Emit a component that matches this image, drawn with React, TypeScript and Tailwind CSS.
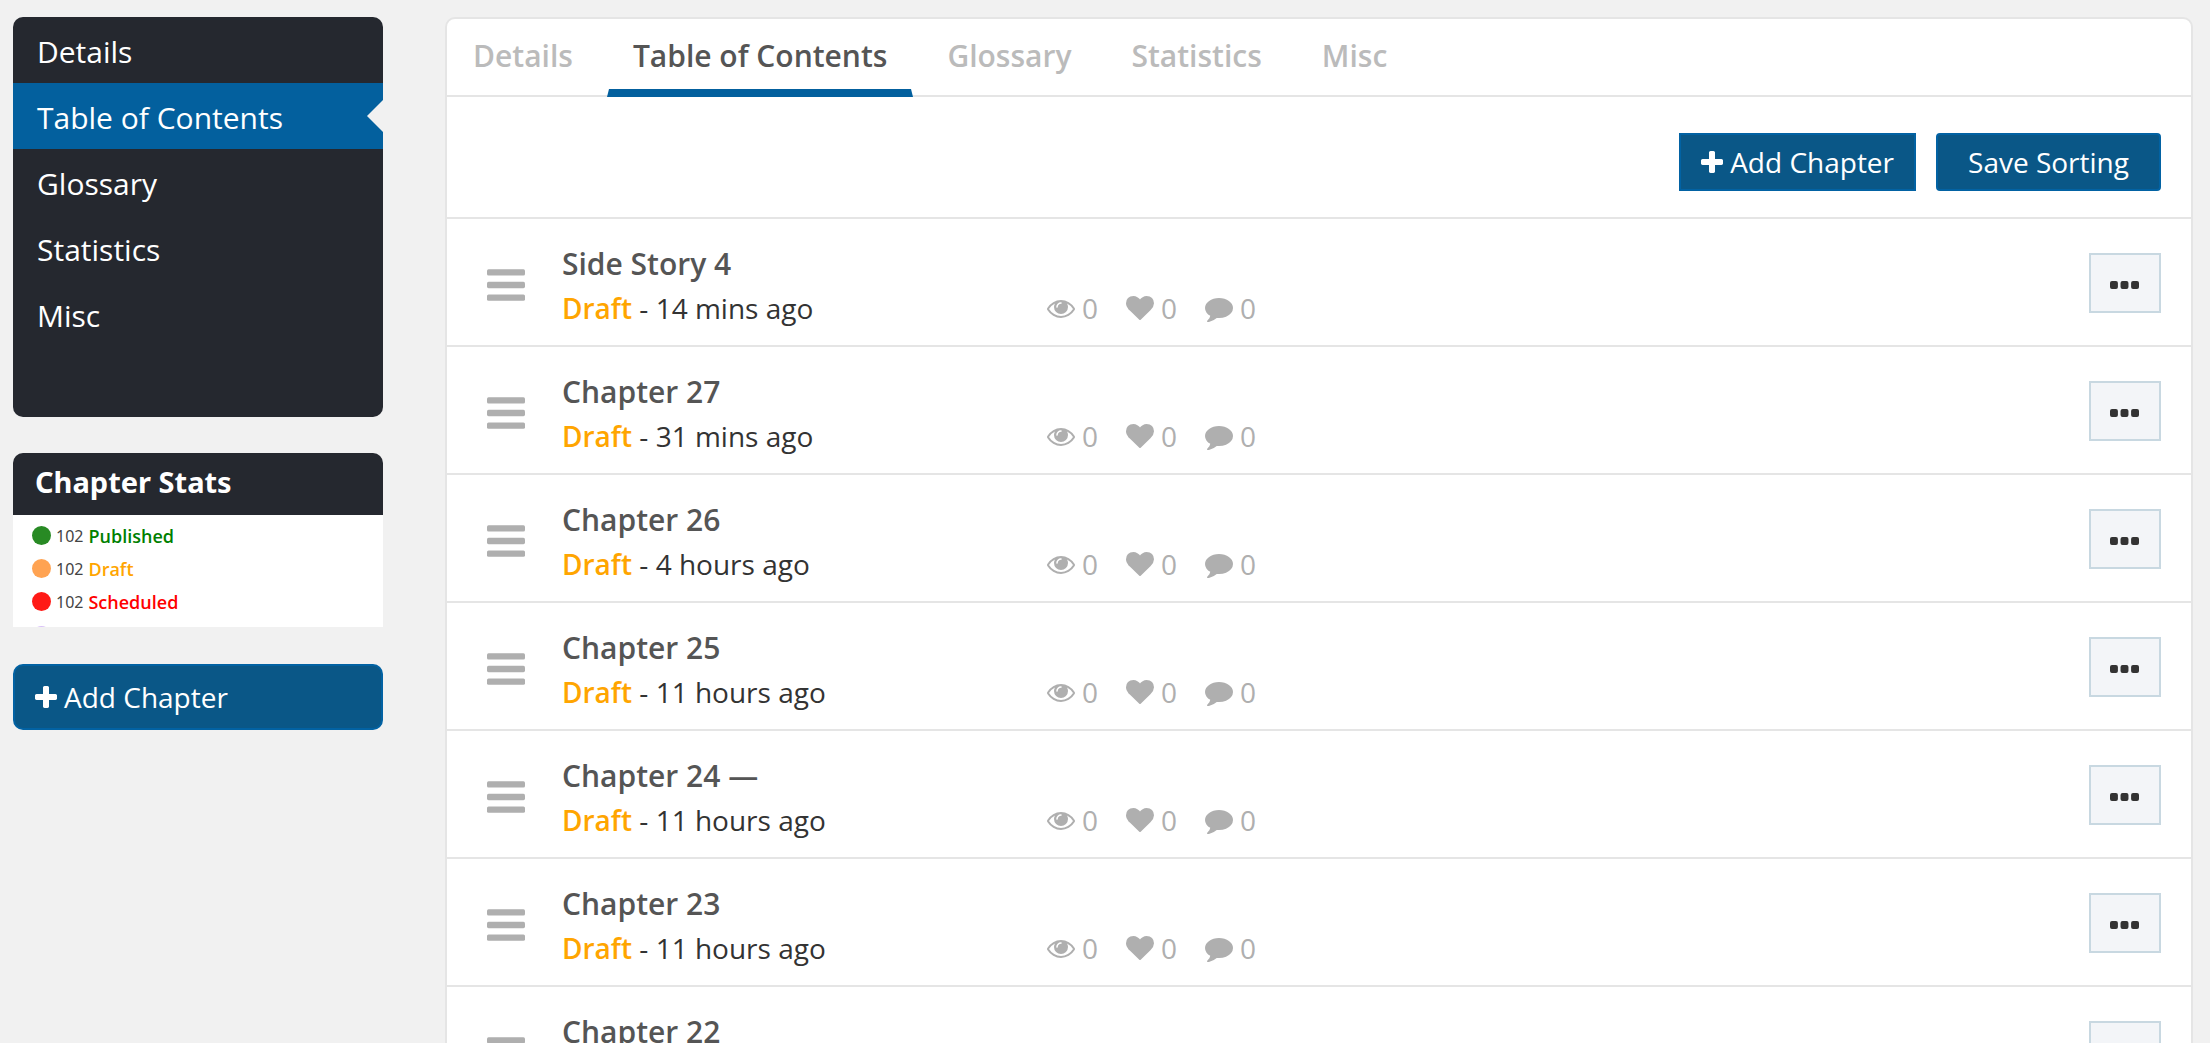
import { useState } from 'react';
import type { ReactNode } from 'react';
import clsx from 'clsx';

const SECTIONS = ['Details', 'Table of Contents', 'Glossary', 'Statistics', 'Misc'];

const STATS = [
  { label: 'Published', count: 102, dot: 'bg-[#288a24]', text: 'text-[#008000]' },
  { label: 'Draft', count: 102, dot: 'bg-[#ffa352]', text: 'text-[#ffa500]' },
  { label: 'Scheduled', count: 102, dot: 'bg-[#ff1a16]', text: 'text-[#ff0000]' },
];

const CHAPTERS = [
  { title: 'Side Story 4', updated: '14 mins ago' },
  { title: 'Chapter 27', updated: '31 mins ago' },
  { title: 'Chapter 26', updated: '4 hours ago' },
  { title: 'Chapter 25', updated: '11 hours ago' },
  { title: 'Chapter 24 —', updated: '11 hours ago' },
  { title: 'Chapter 23', updated: '11 hours ago' },
  { title: 'Chapter 22', updated: '11 hours ago' },
];

function PlusIcon() {
  return (
    <svg viewBox="192 128 1408 1408" className="size-[22px] shrink-0" fill="currentColor" aria-hidden="true">
      <path d="M1600 736v192q0 40-28 68t-68 28h-416v416q0 40-28 68t-68 28h-192q-40 0-68-28t-28-68v-416h-416q-40 0-68-28t-28-68v-192q0-40 28-68t68-28h416v-416q0-40 28-68t68-28h192q40 0 68 28t28 68v416h416q40 0 68 28t28 68z" />
    </svg>
  );
}

function BarsIcon() {
  return (
    <svg viewBox="0 0 1536 1280" className="h-8 w-[38px]" fill="currentColor" aria-hidden="true">
      <rect width="1536" height="256" rx="64" />
      <rect y="512" width="1536" height="256" rx="64" />
      <rect y="1024" width="1536" height="256" rx="64" />
    </svg>
  );
}

function DotsIcon() {
  return (
    <svg viewBox="0 0 1408 384" className="h-2 w-[29px]" fill="currentColor" aria-hidden="true">
      <rect width="384" height="384" rx="96" />
      <rect x="512" width="384" height="384" rx="96" />
      <rect x="1024" width="384" height="384" rx="96" />
    </svg>
  );
}

const ICON_PATHS = {
  views: 'M1664 960q-152-236-381-353 61 104 61 225 0 185-131.5 316.5t-316.5 131.5-316.5-131.5-131.5-316.5q0-121 61-225-229 117-381 353 133 205 333.5 326.5t434.5 121.5 434.5-121.5 333.5-326.5zm-720-384q0-20-14-34t-34-14q-125 0-214.5 89.5t-89.5 214.5q0 20 14 34t34 14 34-14 14-34q0-86 61-147t147-61q20 0 34-14t14-34zm848 384q0 34-20 69-140 230-376.5 368.5t-499.5 138.5-499.5-139-376.5-368q-20-35-20-69t20-69q140-229 376.5-368t499.5-139 499.5 139 376.5 368q20 35 20 69z',
  likes: 'M896 1664q-26 0-44-18l-624-602q-10-8-27.5-26t-55.5-65.5-68-97.5-53.5-121-23.5-138q0-220 127-344t351-124q62 0 126.5 21.5t120 58 95.5 68.5 76 68q36-36 76-68t95.5-68.5 120-58 126.5-21.5q224 0 351 124t127 344q0 221-229 450l-623 600q-18 18-44 18z',
  comments: 'M1792 896q0 174-120 321.5t-326 233-450 85.5q-70 0-145-8-198 175-460 242-49 14-114 22-17 2-30.5-9t-17.5-29v-1q-3-4-.5-12t2-10 4.5-9.5l6-9 7-8.5 8-9q7-8 31-34.5t34.5-38 31-39.5 32.5-51 27-59 26-76q-157-89-247.5-220t-90.5-281q0-130 71-248.5t191-204.5 286-136.5 348-50.5 348 50.5 286 136.5 191 204.5 71 248.5z',
};

function Counter({ icon, value }: { icon: keyof typeof ICON_PATHS; value: number }) {
  return (
    <li className="flex items-center gap-[7px]">
      <svg viewBox="0 0 1792 1792" className="size-7" fill="currentColor" role="img" aria-label={icon}>
        <path d={ICON_PATHS[icon]} />
      </svg>
      {value}
    </li>
  );
}

function Button({ className, children }: { className?: string; children: ReactNode }) {
  return (
    <button
      type="button"
      className={clsx('flex items-center gap-[7px] border-2 border-[#0262a3] bg-[#0a5787] text-[28px] leading-[38px] text-white hover:bg-[#0262a3]', className)}
    >
      {children}
    </button>
  );
}

export default function App() {
  const [section, setSection] = useState('Table of Contents');

  return (
    <div className="flex min-h-screen items-start gap-[62px] bg-[#f1f1f1] pt-[17px] pr-[17px] pl-[13px] font-['Open_Sans','Noto_Sans',sans-serif] text-[#333]">
      <aside className="w-[370px] shrink-0">
        <nav className="overflow-hidden rounded-[10px] bg-[#25282f] pb-[70px]">
          {SECTIONS.map((name) => (
            <a
              key={name}
              href="#"
              onClick={() => setSection(name)}
              className={clsx('flex items-center justify-between pl-6 text-[30px] text-white', name === section && 'bg-[#03609e]')}
            >
              <span className="pt-1 leading-[62px]">{name}</span>
              {name === section && <span className="border-y-16 border-r-16 border-y-transparent border-r-[#f1f1f1]" />}
            </a>
          ))}
        </nav>

        <section className="mt-9">
          <h2 className="rounded-t-[10px] bg-[#25282f] pb-1 pl-[22px] font-['Noto_Sans','Open_Sans',sans-serif] text-[29px] leading-[58px] font-bold text-white">
            Chapter Stats
          </h2>
          <ul className="h-28 overflow-hidden bg-white pt-1 pl-[19px]">
            {STATS.map((s) => (
              <li key={s.label} className="flex h-[33px] items-center gap-[5px]">
                <span className={clsx('size-[19px] rounded-full', s.dot)} />
                <span className="font-['Noto_Sans','Open_Sans',sans-serif] text-base text-[#444]">{s.count}</span>
                <span className={clsx('text-lg font-semibold', s.text)}>{s.label}</span>
              </li>
            ))}
            <li className="flex h-[33px] items-center pt-px">
              <span className="size-[19px] rounded-full bg-[#d9c2f7]" />
            </li>
          </ul>
        </section>

        <Button className="mt-[37px] h-[66px] w-full rounded-[10px] px-5">
          <PlusIcon /> Add Chapter
        </Button>
      </aside>

      <main className="min-w-0 flex-1 rounded-t-[10px] border-2 border-[#e5e5e5] bg-white">
        <div className="flex h-[78px] gap-2 border-b-2 border-[#e5e5e5]" role="tablist">
          {SECTIONS.map((name) => (
            <button
              key={name}
              type="button"
              role="tab"
              aria-selected={name === section}
              onClick={() => setSection(name)}
              className={clsx(
                '-mb-0.5 h-[78px] border-x-2 border-b-8 border-x-transparent px-6 pt-1 text-[30px] leading-[66px] font-semibold',
                name === section ? 'border-b-[#03609e] text-[#555]' : 'border-b-transparent text-[#bbb]',
              )}
            >
              {name}
            </button>
          ))}
        </div>

        <div className="flex justify-end gap-5 border-b-2 border-[#e5e5e5] px-[30px] pt-9 pb-[26px]">
          <Button className="h-[58px] px-5">
            <PlusIcon /> Add Chapter
          </Button>
          <Button className="h-[58px] rounded px-[30px]">Save Sorting</Button>
        </div>

        <ul>
          {CHAPTERS.map((c) => (
            <li key={c.title} className="flex h-32 items-center border-b-2 border-[#e5e5e5] pt-0.5 pr-[30px] pl-10">
              <button type="button" aria-label={`Move ${c.title}`} className="mr-[37px] cursor-move pt-1 text-[#afafaf]">
                <BarsIcon />
              </button>
              <div className="w-[485px] pt-1">
                <h3 className="text-[30px] leading-[46px] font-semibold text-[#555]">{c.title}</h3>
                <p className="text-[28px] leading-[42px]">
                  <span className="font-semibold text-[#ffa500]">Draft</span> - {c.updated}
                </p>
              </div>
              <ul className="flex gap-7 self-end pb-4 text-[28px] leading-[42px] text-[#afafaf]">
                <Counter icon="views" value={0} />
                <Counter icon="likes" value={0} />
                <Counter icon="comments" value={0} />
              </ul>
              <button
                type="button"
                aria-label={`Actions for ${c.title}`}
                className="ml-auto flex h-[60px] w-[72px] items-center justify-center border-2 border-[#c8d8e1] bg-[#f3f5f8] pt-1 pr-px text-[#333]"
              >
                <DotsIcon />
              </button>
            </li>
          ))}
        </ul>
      </main>
    </div>
  );
}
